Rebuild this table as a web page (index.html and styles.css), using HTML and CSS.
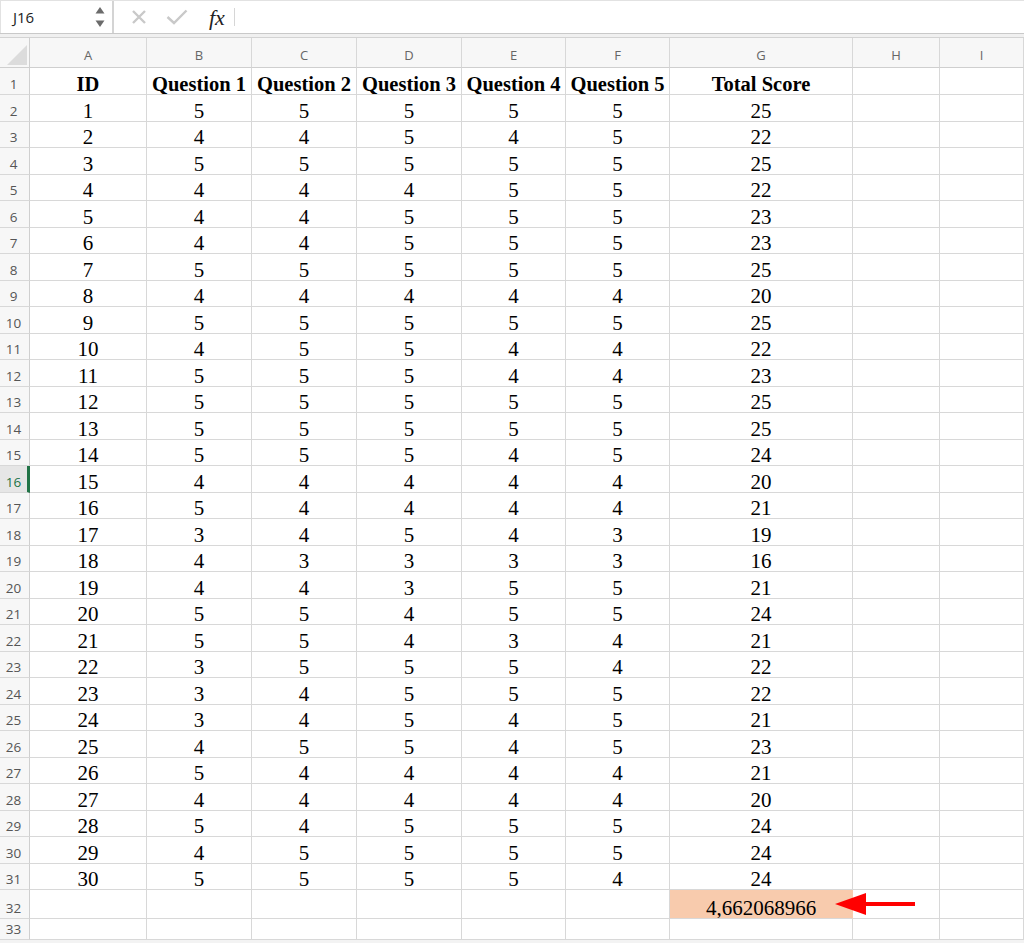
FILE: index.html
```html
<!DOCTYPE html>
<html>
<head>
<meta charset="utf-8">
<link rel="stylesheet" href="styles.css">
</head>
<body>
<div class="app">
  <div class="fbar">
    <div class="namebox">
      <span class="ref">J16</span>
      <span class="spin">
        <svg width="10" height="22" viewBox="0 0 10 22"><path d="M5 1 L9.5 7.5 H0.5 Z" fill="#6b6b6b"/><path d="M5 21 L9.5 14.5 H0.5 Z" fill="#6b6b6b"/></svg>
      </span>
    </div>
    <div class="fbtns">
      <svg class="ico" width="16" height="16" viewBox="0 0 16 16"><path d="M2 2 L14 14 M14 2 L2 14" stroke="#c9c9c9" stroke-width="2.4" fill="none"/></svg>
      <svg class="ico chk" width="22" height="16" viewBox="0 0 22 16"><path d="M1.5 8 L8 14 L20.5 1.5" stroke="#c9c9c9" stroke-width="2.4" fill="none"/></svg>
      <span class="fx">fx</span>
      <span class="vsep"></span>
    </div>
  </div>
  <div class="fsep"></div>
  <div class="sheetwrap">
    <div class="sheet">
      <div class="corner"><svg width="20" height="20" viewBox="0 0 20 20"><path d="M20 0 V20 H0 Z" fill="#dcdcdc"/></svg></div>
      <div class="ch">A</div><div class="ch">B</div><div class="ch">C</div><div class="ch">D</div><div class="ch">E</div><div class="ch">F</div><div class="ch">G</div><div class="ch">H</div><div class="ch">I</div>

      <div class="rh">1</div><div class="c b">ID</div><div class="c b">Question 1</div><div class="c b">Question 2</div><div class="c b">Question 3</div><div class="c b">Question 4</div><div class="c b">Question 5</div><div class="c b">Total Score</div><div class="c"></div><div class="c"></div>
      <div class="rh">2</div><div class="c">1</div><div class="c">5</div><div class="c">5</div><div class="c">5</div><div class="c">5</div><div class="c">5</div><div class="c">25</div><div class="c"></div><div class="c"></div>
      <div class="rh">3</div><div class="c">2</div><div class="c">4</div><div class="c">4</div><div class="c">5</div><div class="c">4</div><div class="c">5</div><div class="c">22</div><div class="c"></div><div class="c"></div>
      <div class="rh">4</div><div class="c">3</div><div class="c">5</div><div class="c">5</div><div class="c">5</div><div class="c">5</div><div class="c">5</div><div class="c">25</div><div class="c"></div><div class="c"></div>
      <div class="rh">5</div><div class="c">4</div><div class="c">4</div><div class="c">4</div><div class="c">4</div><div class="c">5</div><div class="c">5</div><div class="c">22</div><div class="c"></div><div class="c"></div>
      <div class="rh">6</div><div class="c">5</div><div class="c">4</div><div class="c">4</div><div class="c">5</div><div class="c">5</div><div class="c">5</div><div class="c">23</div><div class="c"></div><div class="c"></div>
      <div class="rh">7</div><div class="c">6</div><div class="c">4</div><div class="c">4</div><div class="c">5</div><div class="c">5</div><div class="c">5</div><div class="c">23</div><div class="c"></div><div class="c"></div>
      <div class="rh">8</div><div class="c">7</div><div class="c">5</div><div class="c">5</div><div class="c">5</div><div class="c">5</div><div class="c">5</div><div class="c">25</div><div class="c"></div><div class="c"></div>
      <div class="rh">9</div><div class="c">8</div><div class="c">4</div><div class="c">4</div><div class="c">4</div><div class="c">4</div><div class="c">4</div><div class="c">20</div><div class="c"></div><div class="c"></div>
      <div class="rh">10</div><div class="c">9</div><div class="c">5</div><div class="c">5</div><div class="c">5</div><div class="c">5</div><div class="c">5</div><div class="c">25</div><div class="c"></div><div class="c"></div>
      <div class="rh">11</div><div class="c">10</div><div class="c">4</div><div class="c">5</div><div class="c">5</div><div class="c">4</div><div class="c">4</div><div class="c">22</div><div class="c"></div><div class="c"></div>
      <div class="rh">12</div><div class="c">11</div><div class="c">5</div><div class="c">5</div><div class="c">5</div><div class="c">4</div><div class="c">4</div><div class="c">23</div><div class="c"></div><div class="c"></div>
      <div class="rh">13</div><div class="c">12</div><div class="c">5</div><div class="c">5</div><div class="c">5</div><div class="c">5</div><div class="c">5</div><div class="c">25</div><div class="c"></div><div class="c"></div>
      <div class="rh">14</div><div class="c">13</div><div class="c">5</div><div class="c">5</div><div class="c">5</div><div class="c">5</div><div class="c">5</div><div class="c">25</div><div class="c"></div><div class="c"></div>
      <div class="rh">15</div><div class="c">14</div><div class="c">5</div><div class="c">5</div><div class="c">5</div><div class="c">4</div><div class="c">5</div><div class="c">24</div><div class="c"></div><div class="c"></div>
      <div class="rh sel">16</div><div class="c">15</div><div class="c">4</div><div class="c">4</div><div class="c">4</div><div class="c">4</div><div class="c">4</div><div class="c">20</div><div class="c"></div><div class="c"></div>
      <div class="rh">17</div><div class="c">16</div><div class="c">5</div><div class="c">4</div><div class="c">4</div><div class="c">4</div><div class="c">4</div><div class="c">21</div><div class="c"></div><div class="c"></div>
      <div class="rh">18</div><div class="c">17</div><div class="c">3</div><div class="c">4</div><div class="c">5</div><div class="c">4</div><div class="c">3</div><div class="c">19</div><div class="c"></div><div class="c"></div>
      <div class="rh">19</div><div class="c">18</div><div class="c">4</div><div class="c">3</div><div class="c">3</div><div class="c">3</div><div class="c">3</div><div class="c">16</div><div class="c"></div><div class="c"></div>
      <div class="rh">20</div><div class="c">19</div><div class="c">4</div><div class="c">4</div><div class="c">3</div><div class="c">5</div><div class="c">5</div><div class="c">21</div><div class="c"></div><div class="c"></div>
      <div class="rh">21</div><div class="c">20</div><div class="c">5</div><div class="c">5</div><div class="c">4</div><div class="c">5</div><div class="c">5</div><div class="c">24</div><div class="c"></div><div class="c"></div>
      <div class="rh">22</div><div class="c">21</div><div class="c">5</div><div class="c">5</div><div class="c">4</div><div class="c">3</div><div class="c">4</div><div class="c">21</div><div class="c"></div><div class="c"></div>
      <div class="rh">23</div><div class="c">22</div><div class="c">3</div><div class="c">5</div><div class="c">5</div><div class="c">5</div><div class="c">4</div><div class="c">22</div><div class="c"></div><div class="c"></div>
      <div class="rh">24</div><div class="c">23</div><div class="c">3</div><div class="c">4</div><div class="c">5</div><div class="c">5</div><div class="c">5</div><div class="c">22</div><div class="c"></div><div class="c"></div>
      <div class="rh">25</div><div class="c">24</div><div class="c">3</div><div class="c">4</div><div class="c">5</div><div class="c">4</div><div class="c">5</div><div class="c">21</div><div class="c"></div><div class="c"></div>
      <div class="rh">26</div><div class="c">25</div><div class="c">4</div><div class="c">5</div><div class="c">5</div><div class="c">4</div><div class="c">5</div><div class="c">23</div><div class="c"></div><div class="c"></div>
      <div class="rh">27</div><div class="c">26</div><div class="c">5</div><div class="c">4</div><div class="c">4</div><div class="c">4</div><div class="c">4</div><div class="c">21</div><div class="c"></div><div class="c"></div>
      <div class="rh">28</div><div class="c">27</div><div class="c">4</div><div class="c">4</div><div class="c">4</div><div class="c">4</div><div class="c">4</div><div class="c">20</div><div class="c"></div><div class="c"></div>
      <div class="rh">29</div><div class="c">28</div><div class="c">5</div><div class="c">4</div><div class="c">5</div><div class="c">5</div><div class="c">5</div><div class="c">24</div><div class="c"></div><div class="c"></div>
      <div class="rh">30</div><div class="c">29</div><div class="c">4</div><div class="c">5</div><div class="c">5</div><div class="c">5</div><div class="c">5</div><div class="c">24</div><div class="c"></div><div class="c"></div>
      <div class="rh">31</div><div class="c">30</div><div class="c">5</div><div class="c">5</div><div class="c">5</div><div class="c">5</div><div class="c">4</div><div class="c">24</div><div class="c"></div><div class="c"></div>
      <div class="rh">32</div><div class="c"></div><div class="c"></div><div class="c"></div><div class="c"></div><div class="c"></div><div class="c"></div><div class="c hl">4,662068966</div><div class="c"></div><div class="c"></div>
      <div class="rh">33</div><div class="c"></div><div class="c"></div><div class="c"></div><div class="c"></div><div class="c"></div><div class="c"></div><div class="c"></div><div class="c"></div><div class="c"></div>
    </div>
    <svg class="arrow" width="82" height="22" viewBox="0 0 82 22"><path d="M0 11 L31 0 V22 Z" fill="#ff0000"/><rect x="30" y="9" width="50" height="4" fill="#ff0000"/></svg>
  </div>
</div>
</body>
</html>
```

FILE: styles.css
```css
* { box-sizing: border-box; }
html, body { margin: 0; padding: 0; background: #ffffff; }
.app { width: 1024px; height: 943px; overflow: hidden; background: #f3f3f3; }

.fbar {
  height: 34px;
  display: flex;
  background: #ffffff;
  border-top: 1px solid #e2e2e2;
  border-bottom: 1px solid #c9c9c9;
}
.namebox {
  width: 114px;
  display: flex;
  align-items: center;
  justify-content: space-between;
  padding: 0 6px 0 12px;
  border-right: 2px solid #d4d4d4;
  border-left: 1px solid #e2e2e2;
}
.ref {
  font-family: "Open Sans", "Liberation Sans", sans-serif;
  font-size: 15px;
  color: #222;
}
.spin { display: flex; align-items: center; margin-right: 1px; }
.fbtns {
  display: flex;
  align-items: center;
  padding-left: 17px;
}
.ico { display: block; }
.chk { margin-left: 19px; }
.fx {
  font-family: "Liberation Serif", serif;
  font-style: italic;
  font-size: 22px;
  color: #222;
  margin-left: 21px;
  margin-top: 1px;
}
.vsep {
  width: 1px;
  height: 18px;
  background: #d6d6d6;
  margin-left: 9px;
}
.fsep {
  height: 4px;
  background: #f0f0f0;
  border-bottom: 1px solid #d3d3d3;
}

.sheetwrap { position: relative; }
.sheet {
  display: grid;
  grid-template-columns: 30px 117px 105px 105px 105px 104px 104px 183px 87px 84px;
  grid-template-rows: 30px 27px repeat(30, 26.5px) 29px 21px;
  background: #ffffff;
}
.corner {
  background: #f7f7f7;
  border-right: 1px solid #cfcfcf;
  border-bottom: 1px solid #cfcfcf;
  display: flex;
  align-items: flex-end;
  justify-content: flex-end;
  padding: 0 2px 2px 0;
}
.corner svg { display: block; }
.ch {
  background: #f7f7f7;
  border-right: 1px solid #d8d8d8;
  border-bottom: 1px solid #cfcfcf;
  font-family: "Open Sans", "Liberation Sans", sans-serif;
  font-size: 13px;
  color: #666;
  display: flex;
  align-items: center;
  justify-content: center;
  padding-top: 5px;
}
.rh {
  background: #f7f7f7;
  border-right: 1px solid #cfcfcf;
  border-bottom: 1px solid #d8d8d8;
  font-family: "Open Sans", "Liberation Sans", sans-serif;
  font-size: 13.5px;
  color: #555;
  display: flex;
  align-items: flex-end;
  justify-content: center;
  padding: 0 2px 1px 0;
  line-height: 18px;
}
.rh.sel {
  background: #e6e6e6;
  color: #217346;
  border-right: 3px solid #217346;
  padding-right: 0;
}
.c {
  border-right: 1px solid #d8d8d8;
  border-bottom: 1px solid #d8d8d8;
  font-family: "Liberation Serif", "Times New Roman", serif;
  font-size: 21px;
  color: #000;
  display: flex;
  align-items: flex-end;
  justify-content: center;
  white-space: nowrap;
  overflow: hidden;
  line-height: 19px;
}
.c.b { font-weight: bold; font-size: 20.5px; }
.c.hl { background: #f8cbad; border-right-color: #f8cbad; }

.arrow {
  position: absolute;
  left: 835px;
  top: 855px;
  display: block;
}
```
